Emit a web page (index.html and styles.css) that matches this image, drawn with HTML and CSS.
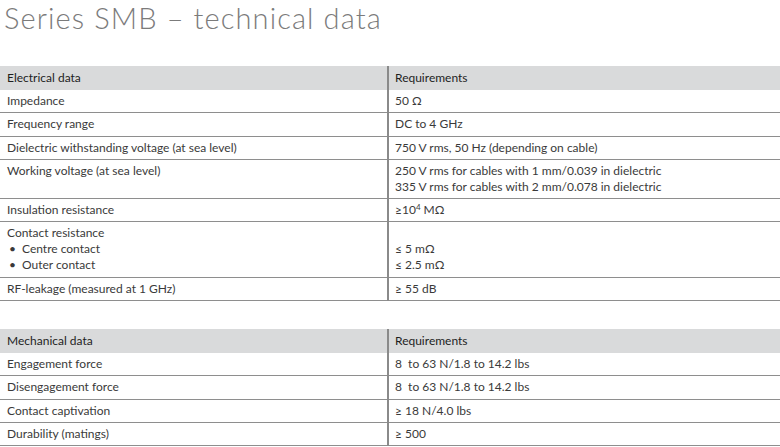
FILE: index.html
```html
<!DOCTYPE html>
<html>
<head>
<meta charset="utf-8">
<link rel="stylesheet" href="styles.css">
</head>
<body>
<h1 class="title">Series SMB – technical data</h1>
<table class="spec">
  <colgroup><col class="c1"><col class="c2"></colgroup>
  <thead>
    <tr><th>Electrical data</th><th class="r">Requirements</th></tr>
  </thead>
  <tbody>
    <tr><td>Impedance</td><td class="r">50 Ω</td></tr>
    <tr><td>Frequency range</td><td class="r">DC to 4 GHz</td></tr>
    <tr><td>Dielectric withstanding voltage (at sea level)</td><td class="r">750 V rms, 50 Hz (depending on cable)</td></tr>
    <tr><td>Working voltage (at sea level)</td><td class="r">250 V rms for cables with 1 mm/0.039 in dielectric<br>335 V rms for cables with 2 mm/0.078 in dielectric</td></tr>
    <tr><td>Insulation resistance</td><td class="r">≥10<sup>4</sup> MΩ</td></tr>
    <tr><td>Contact resistance<br><span class="bul">•</span>Centre contact<br><span class="bul">•</span>Outer contact</td><td class="r"><br>≤ 5 mΩ<br>≤ 2.5 mΩ</td></tr>
    <tr><td>RF-leakage (measured at 1 GHz)</td><td class="r">≥ 55 dB</td></tr>
  </tbody>
</table>
<table class="spec second">
  <colgroup><col class="c1"><col class="c2"></colgroup>
  <thead>
    <tr><th>Mechanical data</th><th class="r">Requirements</th></tr>
  </thead>
  <tbody>
    <tr><td>Engagement force</td><td class="r">8&nbsp; to 63 N/1.8 to 14.2 lbs</td></tr>
    <tr><td>Disengagement force</td><td class="r">8&nbsp; to 63 N/1.8 to 14.2 lbs</td></tr>
    <tr><td>Contact captivation</td><td class="r">≥ 18 N/4.0 lbs</td></tr>
    <tr><td>Durability (matings)</td><td class="r">≥ 500</td></tr>
  </tbody>
</table>
</body>
</html>
```
FILE: styles.css
```css
html, body {
  margin: 0;
  padding: 0;
  background: #fff;
}
body {
  font-family: Lato, "Noto Sans", sans-serif;
  font-size: 12px;
  color: #3a3a3a;
  width: 780px;
  overflow: hidden;
}
.title {
  margin: 0;
  padding: 0 0 0 4px;
  height: 66px;
  font-family: Lato, sans-serif;
  font-weight: 300;
  font-size: 29px;
  line-height: 36px;
  color: #7b7b7b;
  letter-spacing: 1.1px;
}
.spec {
  width: 780px;
  border-collapse: collapse;
  table-layout: fixed;
}
.spec .c1 { width: 388px; }
.spec th {
  background: #d9dadb;
  text-align: left;
  font-weight: 400;
  color: #1e1e1e;
  height: 24px;
  padding: 0 7px;
  line-height: 16px;
}
.spec td {
  padding: 3px 7px 3.3px;
  line-height: 16px;
  border-bottom: 1px solid #8e8e8e;
  vertical-align: top;
}
.spec .r {
  border-left: 2px solid #8a8a8a;
  padding-left: 6px;
}
.spec sup {
  font-size: 8px;
  line-height: 0;
  vertical-align: 4px;
}
.bul {
  display: inline-block;
  width: 13px;
  padding-left: 2px;
}
.second {
  margin-top: 28px;
}
```
